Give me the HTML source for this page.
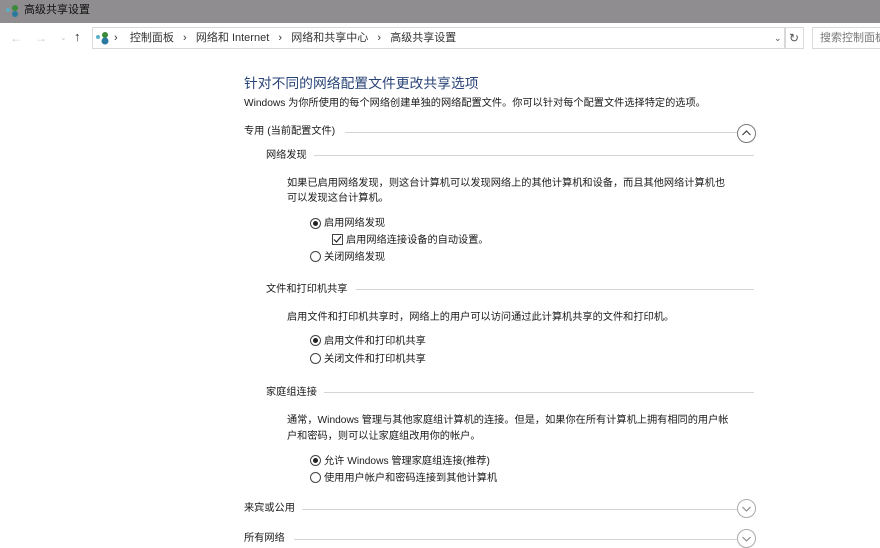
<!DOCTYPE html>
<html><head><meta charset="utf-8"><style>
*{margin:0;padding:0;box-sizing:border-box}
body{width:880px;height:544px;overflow:hidden;background:#fff;position:relative;font-family:"Liberation Sans","Noto Sans CJK SC",sans-serif;font-size:10.2px;color:#1a1a1a}
.a{position:absolute;white-space:nowrap;line-height:14px}
.l{position:absolute;height:1px;background:#d4d4d4}
.r{position:absolute;width:11px;height:11px;border:1px solid #444;border-radius:50%}
.r.on::after{content:"";position:absolute;left:2px;top:2px;width:5px;height:5px;border-radius:50%;background:#222}
.c{position:absolute;width:19px;height:19px;border:1px solid #777;border-radius:50%}
</style></head><body>
<div style="position:absolute;left:0;top:0;width:880px;height:23px;background:#8f8d8f"></div>
<svg style="position:absolute;left:5px;top:4px" width="16" height="14"><circle cx="3" cy="6" r="2" fill="#5ab0c8"/><circle cx="10" cy="4" r="3" fill="#3a8a3a"/><circle cx="10" cy="10" r="3" fill="#2a7aa0"/></svg>
<div class="a" style="left:24px;top:3px;color:#111;font-size:11px">高级共享设置</div>
<div class="a" style="left:10px;top:31px;color:#ccc;font-size:12px">←</div>
<div class="a" style="left:35px;top:31px;color:#ccc;font-size:12px">→</div>
<div class="a" style="left:60px;top:31px;color:#ccc;font-size:8px">⌄</div>
<div class="a" style="left:74px;top:30px;color:#333;font-size:13px">↑</div>
<div style="position:absolute;left:92px;top:27px;width:693px;height:22px;border:1px solid #d9d9d9"></div>
<div style="position:absolute;left:785px;top:27px;width:19px;height:22px;border:1px solid #d9d9d9"></div>
<div class="a" style="left:789px;top:31px;color:#555;font-size:12px">↻</div>
<div class="a" style="left:774px;top:31px;color:#555;font-size:9px">⌄</div>
<div style="position:absolute;left:812px;top:27px;width:70px;height:22px;border:1px solid #d9d9d9"></div>
<div class="a" style="left:820px;top:31px;color:#777;font-size:11px">搜索控制面板</div>
<svg style="position:absolute;left:95px;top:30px" width="16" height="16"><circle cx="3" cy="7" r="2" fill="#5ab0c8"/><circle cx="10" cy="5" r="3" fill="#3a8a3a"/><circle cx="10" cy="11" r="3.5" fill="#2a7aa0"/></svg>
<div class="a" style="left:114px;top:31px;color:#333;font-size:11px">›&nbsp;&nbsp;&nbsp;&nbsp;控制面板&nbsp;&nbsp;&nbsp;›&nbsp;&nbsp;&nbsp;网络和 Internet&nbsp;&nbsp;&nbsp;›&nbsp;&nbsp;&nbsp;网络和共享中心&nbsp;&nbsp;&nbsp;›&nbsp;&nbsp;&nbsp;高级共享设置</div>

<div class="a" style="left:244px;top:74px;font-size:13.8px;line-height:20px;color:#2a4478">针对不同的网络配置文件更改共享选项</div>
<div class="a" style="left:244px;top:97px">Windows 为你所使用的每个网络创建单独的网络配置文件。你可以针对每个配置文件选择特定的选项。</div>
<div class="a" style="left:244px;top:125px">专用 (当前配置文件)</div>
<div class="l" style="left:345px;top:132px;width:392px"></div>
<div class="c" style="left:737px;top:124px"></div>
<svg style="position:absolute;left:741px;top:129px" width="11" height="8"><path d="M1.5 6L5.5 2L9.5 6" fill="none" stroke="#444" stroke-width="1.2"/></svg>

<div class="a" style="left:266px;top:149px">网络发现</div>
<div class="l" style="left:314px;top:155px;width:440px"></div>
<div class="a" style="left:287px;top:177px">如果已启用网络发现，则这台计算机可以发现网络上的其他计算机和设备，而且其他网络计算机也</div>
<div class="a" style="left:287px;top:192px">可以发现这台计算机。</div>
<div class="r on" style="left:310px;top:218px"></div>
<div class="a" style="left:324px;top:217px">启用网络发现</div>
<div style="position:absolute;left:332px;top:234px;width:11px;height:11px;border:1px solid #444"></div>
<svg style="position:absolute;left:332px;top:234px" width="11" height="11"><path d="M2 5.5L4.5 8L9 2.5" fill="none" stroke="#222" stroke-width="1.2"/></svg>
<div class="a" style="left:346px;top:234px">启用网络连接设备的自动设置。</div>
<div class="r" style="left:310px;top:251px"></div>
<div class="a" style="left:324px;top:251px">关闭网络发现</div>

<div class="a" style="left:266px;top:283px">文件和打印机共享</div>
<div class="l" style="left:356px;top:289px;width:398px"></div>
<div class="a" style="left:287px;top:311px">启用文件和打印机共享时，网络上的用户可以访问通过此计算机共享的文件和打印机。</div>
<div class="r on" style="left:310px;top:335px"></div>
<div class="a" style="left:324px;top:335px">启用文件和打印机共享</div>
<div class="r" style="left:310px;top:353px"></div>
<div class="a" style="left:324px;top:353px">关闭文件和打印机共享</div>

<div class="a" style="left:266px;top:386px">家庭组连接</div>
<div class="l" style="left:324px;top:392px;width:430px"></div>
<div class="a" style="left:287px;top:414px">通常，Windows 管理与其他家庭组计算机的连接。但是，如果你在所有计算机上拥有相同的用户帐</div>
<div class="a" style="left:287px;top:430px">户和密码，则可以让家庭组改用你的帐户。</div>
<div class="r on" style="left:310px;top:455px"></div>
<div class="a" style="left:324px;top:455px">允许 Windows 管理家庭组连接(推荐)</div>
<div class="r" style="left:310px;top:472px"></div>
<div class="a" style="left:324px;top:472px">使用用户帐户和密码连接到其他计算机</div>

<div class="a" style="left:244px;top:502px">来宾或公用</div>
<div class="l" style="left:302px;top:509px;width:435px"></div>
<div class="c" style="left:737px;top:499px;border-color:#aaa"></div>
<svg style="position:absolute;left:741px;top:505px" width="11" height="8"><path d="M1.5 2L5.5 6L9.5 2" fill="none" stroke="#888" stroke-width="1.1"/></svg>
<div class="a" style="left:244px;top:532px">所有网络</div>
<div class="l" style="left:294px;top:539px;width:443px"></div>
<div class="c" style="left:737px;top:529px;border-color:#aaa"></div>
<svg style="position:absolute;left:741px;top:535px" width="11" height="8"><path d="M1.5 2L5.5 6L9.5 2" fill="none" stroke="#888" stroke-width="1.1"/></svg>
</body></html>
